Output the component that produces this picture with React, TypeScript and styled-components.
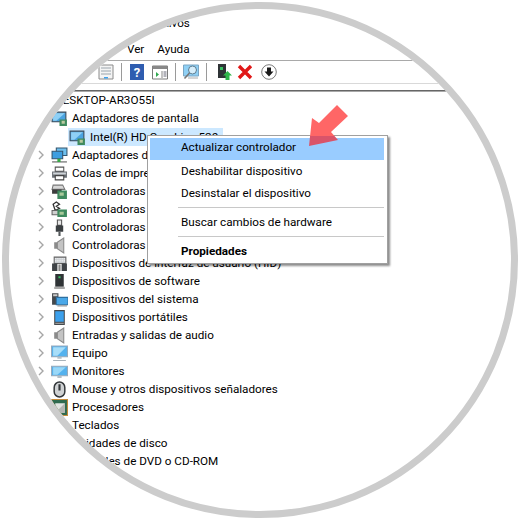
import { ReactNode } from 'react';
import styled, { createGlobalStyle } from 'styled-components';

const GlobalStyle = createGlobalStyle`
  html, body {
    margin: 0;
    padding: 0;
    background: #fff;
  }
  body {
    font-family: Roboto, "Noto Sans", sans-serif;
    font-size: 11.7px;
    color: #000;
  }
`;

const Page = styled.div`
  width: 520px;
  height: 520px;
  padding: 2px;
  box-sizing: border-box;
  background: #fff;
  overflow: hidden;
`;

const Lens = styled.div`
  position: relative;
  width: 516px;
  height: 516px;
  box-sizing: border-box;
  border: 7px solid #cccccc;
  border-radius: 50%;
  overflow: hidden;
  background: #fff;
`;

const TitleBar = styled.div`
  height: 23px;
  padding: 7px 0 0 26px;
  line-height: 14px;
`;

const MenuBar = styled.div`
  display: flex;
  gap: 13px;
  height: 21px;
  padding-left: 17px;
  line-height: 20px;
`;

const Toolbar = styled.div`
  display: flex;
  align-items: center;
  height: 22px;
  padding-left: 89px;
  border-top: 1px solid #a9a9a9;
  border-bottom: 1px solid #d9d9d9;
`;

const ToolSep = styled.span`
  width: 1px;
  height: 18px;
  margin: 0 7px;
  background: #9a9a9a;
`;

const ToolIcon = styled.svg<{ $lead?: number; $gap?: number }>`
  width: 16px;
  height: 16px;
  flex: none;
  margin-left: ${(p) => p.$lead ?? 0}px;
  margin-right: ${(p) => p.$gap ?? 0}px;
`;

const Rule = styled.div`
  height: 2px;
  margin-top: 6px;
  background: linear-gradient(#666 50%, #a8a8a8 50%);
`;

const Tree = styled.div`
  margin-top: -1px;
`;

const Row = styled.div<{ $indent: number; $drop?: boolean }>`
  display: flex;
  align-items: center;
  height: 18px;
  margin-top: ${(p) => (p.$drop ? 1 : 0)}px;
  padding-left: ${(p) => p.$indent}px;
  white-space: nowrap;
`;

const Arrow = styled.svg`
  width: 6px;
  height: 10px;
  flex: none;
  margin-right: 7px;
`;

const NoArrow = styled.span`
  width: 13px;
  flex: none;
`;

const RowIcon = styled.svg`
  width: 17px;
  height: 17px;
  flex: none;
  margin-right: 4px;
`;

const RowLabel = styled.span`
  line-height: 18px;
`;

const Selected = styled.div`
  display: flex;
  align-items: center;
  width: 154px;
  height: 18px;
  margin-left: -1px;
  padding-left: 1px;
  background: #cce8ff;
`;

const ContextMenu = styled.div`
  position: absolute;
  left: 138px;
  top: 126px;
  width: 241px;
  padding: 2px 2px 1px;
  box-sizing: border-box;
  background: #fff;
  border: 1px solid #a0a0a0;
  box-shadow: 2px 2px 2px rgba(0, 0, 0, 0.45);
`;

const MenuItem = styled.div<{ $active?: boolean; $bold?: boolean }>`
  height: 22px;
  margin-right: 1px;
  padding-left: 31px;
  line-height: ${(p) => (p.$active ? 19 : 22)}px;
  background: ${(p) => (p.$active ? '#99ccff' : 'transparent')};
  font-weight: ${(p) => (p.$bold ? 700 : 400)};
`;

const MenuSep = styled.div`
  height: 1px;
  margin: 3px 1px 3px 28px;
  background: #c8c8c8;
`;

const Pointer = styled.svg`
  position: absolute;
  left: 297px;
  top: 96px;
  width: 45px;
  height: 45px;
`;

type IconKind =
  | 'display' | 'network' | 'printer' | 'storage' | 'sound' | 'usb' | 'speaker'
  | 'input' | 'tower' | 'system' | 'portable' | 'monitor' | 'pc' | 'mouse' | 'cpu' | 'keyboard' | 'disk' | 'dvd';

const glyphs: Record<IconKind, ReactNode> = {
  display: (
    <>
      <path d="M1 2h13v9H1z" fill="#4aa3e0" stroke="#3a4a58" />
      <path d="M2 3h11L5 10H2z" fill="#8fd0f5" />
      <path d="M8 9h7v6H8z" fill="#3f8a5e" />
      <path d="M10 10h3v3h-3z" fill="#b9c9a0" />
    </>
  ),
  network: (
    <>
      <path d="M5 1h10v7H5z" fill="#6fc0ee" stroke="#34566f" />
      <path d="M1 4h10v7H1z" fill="#3d9ee0" stroke="#34566f" />
      <path d="M1 14h14" stroke="#9a9a9a" strokeWidth="1.5" />
      <path d="M6 11h3v3H6z" fill="#36a846" />
    </>
  ),
  printer: (
    <>
      <path d="M4 2h8v4H4z" fill="#fff" stroke="#555" />
      <path d="M1 6h14v6H1z" fill="#6a6f75" />
      <path d="M2 7h12v2H2z" fill="#cfd4d8" />
      <path d="M4 10h8v4H4z" fill="#fff" stroke="#444" />
    </>
  ),
  storage: (
    <>
      <path d="M2 2h9l2 4H1z" fill="#d8d8d8" stroke="#777" />
      <path d="M1 6h9v4H1z" fill="#3d3d3d" />
      <path d="M6 7h9v8H6z" fill="#3f8a5e" />
      <path d="M8 9h4v3H8z" fill="#a9c99a" />
    </>
  ),
  sound: (
    <>
      <path d="M2 3l3-2 3 2-3 2 3 2-4 2z" fill="none" stroke="#333" strokeWidth="1.2" />
      <path d="M1 9h7v4H1z" fill="#cfcfcf" stroke="#666" />
      <path d="M6 8h9v7H6z" fill="#3f8a5e" />
      <path d="M8 10h4v3H8z" fill="#a9c99a" />
    </>
  ),
  usb: (
    <>
      <path d="M6 1h4v5H6z" fill="#e8e8e8" stroke="#555" />
      <path d="M4.500 6h7v6h-7z" fill="#3b3f42" />
      <path d="M7 12h2v4H7z" fill="#55595c" />
    </>
  ),
  speaker: (
    <>
      <path d="M3 5h3v6H3z" fill="#8b8b8b" />
      <path d="M6 5l6-4v14l-6-4z" fill="#c4c4c4" stroke="#8b8b8b" />
    </>
  ),
  input: (
    <>
      <path d="M3 2h11v6H3z" fill="#c8ccd0" stroke="#666" />
      <path d="M4 3.500h9M4 5.500h9" stroke="#fff" strokeDasharray="1 1" />
      <path d="M1 8h5v7H1zM10 8h5v7h-5z" fill="#3f4347" />
      <path d="M7 9h2v6H7z" fill="#888" />
    </>
  ),
  tower: (
    <>
      <path d="M4 1h8v12H4z" fill="#2f3336" />
      <path d="M7 3h2v2H7z" fill="#36c060" />
      <path d="M3 13h10v2H3z" fill="#a8a8a8" />
    </>
  ),
  system: (
    <>
      <path d="M1 2h6v11H1z" fill="#44484c" />
      <path d="M2 3h4v2H2z" fill="#ccc" />
      <path d="M5 6h11v7H5z" fill="#4aa8e8" stroke="#2f6f9f" />
      <path d="M6 14h9" stroke="#999" />
    </>
  ),
  portable: (
    <>
      <path d="M3 1h10v14H3z" fill="#454a4e" />
      <path d="M4 2h8v10H4z" fill="#3ca0ec" />
      <path d="M4 13h8v1H4z" fill="#999" />
    </>
  ),
  monitor: (
    <>
      <path d="M0.500 3h15v9H0.500z" fill="#54b2ee" stroke="#9ab" />
      <path d="M2 4h12L6 11H2z" fill="#9ad8f8" />
      <path d="M6 12h4v2H6z" fill="#b5bfc6" />
    </>
  ),
  pc: (
    <>
      <path d="M0.500 1h15v10H0.500z" fill="#54b2ee" stroke="#9ab" />
      <path d="M2 2h12L6 10H2z" fill="#a8def9" />
      <path d="M6 11h4v2H6z" fill="#b5bfc6" />
      <path d="M2 14h12v1H2z" fill="#a9b3ba" />
    </>
  ),
  mouse: (
    <>
      <rect x="3" y="1" width="10" height="14" rx="5" fill="#cfd2d4" stroke="#33373a" strokeWidth="1.4" />
      <path d="M7 3h2v6H7z" fill="#33373a" />
    </>
  ),
  cpu: (
    <>
      <path d="M0 0h16v16H0z" fill="#c48a3a" />
      <path d="M1 1h14v14H1z" fill="#2f6b50" />
      <path d="M4 4h9v9H4z" fill="#e2e4e2" />
      <path d="M13 4v9H4z" fill="#b3b6b3" />
    </>
  ),
  keyboard: <path d="M0 5h16v8H0z" fill="#b9bec2" stroke="#666" />,
  disk: <path d="M1 5h14v8H1z" fill="#b9bec2" stroke="#666" />,
  dvd: <path d="M1 5h14v8H1z" fill="#b9bec2" stroke="#666" />,
};

type Item = { label: string; icon?: IconKind; indent?: number; selected?: boolean; leaf?: boolean };

const items: Item[] = [
  { label: 'DESKTOP-AR3O55I', indent: 33, leaf: true },
  { label: 'Adaptadores de pantalla', icon: 'display', leaf: true },
  { label: 'Intel(R) HD Graphics 520', icon: 'display', indent: 47, selected: true, leaf: true },
  { label: 'Adaptadores de red', icon: 'network' },
  { label: 'Colas de impresión', icon: 'printer' },
  { label: 'Controladoras de almacenamiento', icon: 'storage' },
  { label: 'Controladoras de sonido y vídeo', icon: 'sound' },
  { label: 'Controladoras de bus serie universal', icon: 'usb' },
  { label: 'Controladoras de audio', icon: 'speaker' },
  { label: 'Dispositivos de interfaz de usuario (HID)', icon: 'input' },
  { label: 'Dispositivos de software', icon: 'tower' },
  { label: 'Dispositivos del sistema', icon: 'system' },
  { label: 'Dispositivos portátiles', icon: 'portable' },
  { label: 'Entradas y salidas de audio', icon: 'speaker' },
  { label: 'Equipo', icon: 'pc' },
  { label: 'Monitores', icon: 'monitor' },
  { label: 'Mouse y otros dispositivos señaladores', icon: 'mouse', leaf: true },
  { label: 'Procesadores', icon: 'cpu' },
  { label: 'Teclados', icon: 'keyboard' },
  { label: 'Unidades de disco', icon: 'disk' },
  { label: 'Unidades de DVD o CD-ROM', icon: 'dvd' },
];

const Chevron = () => (
  <Arrow viewBox="0 0 6 10">
    <path d="M1 1l4 4-4 4" fill="none" stroke="#a6a6a6" strokeWidth="1.4" />
  </Arrow>
);

const TreeRow = ({ item }: { item: Item }) => {
  const body = (
    <>
      {item.icon && <RowIcon viewBox="0 0 16 16">{glyphs[item.icon]}</RowIcon>}
      <RowLabel>{item.label}</RowLabel>
    </>
  );
  return (
    <Row $indent={item.indent ?? 29} $drop={item.selected}>
      {item.leaf ? <NoArrow /> : <Chevron />}
      {item.selected ? <Selected>{body}</Selected> : body}
    </Row>
  );
};

export default function App() {
  return (
    <Page>
      <GlobalStyle />
      <Lens>
        <TitleBar>Administrador de dispositivos</TitleBar>
        <MenuBar>
          <span>Archivo</span>
          <span>Acción</span>
          <span>Ver</span>
          <span>Ayuda</span>
        </MenuBar>
        <Toolbar>
          <ToolIcon viewBox="0 0 16 16">
            <path d="M1 1h14v14H1z" fill="#f4f4f4" stroke="#8a8a8a" />
            <path d="M3 4h10M3 7h10M3 10h10" stroke="#9aa4ac" />
            <path d="M6 13h4v1.500H6z" fill="#3ca0ec" />
          </ToolIcon>
          <ToolSep />
          <ToolIcon viewBox="0 0 16 16" $gap={7}>
            <path d="M1 0h14v16H1z" fill="#2f5db0" />
            <text x="8" y="13" fontSize="13" fontWeight="700" fill="#fff" textAnchor="middle">?</text>
          </ToolIcon>
          <ToolIcon viewBox="0 0 16 16">
            <path d="M0.500 2h15v13H0.500z" fill="#fff" stroke="#7a7a7a" />
            <path d="M0.500 2h15v3H0.500z" fill="#888" />
            <path d="M4 8l3 2.500-3 2.500z" fill="#2fa84f" />
            <path d="M10 7v7" stroke="#888" />
            <path d="M11.500 8h3M11.500 10h3M11.500 12h3" stroke="#667" />
          </ToolIcon>
          <ToolSep />
          <ToolIcon viewBox="0 0 16 16">
            <path d="M0.500 1h15v11H0.500z" fill="#8fd0f5" stroke="#7aa6c4" />
            <circle cx="9.500" cy="6" r="4" fill="#d6eefb" stroke="#5d7c90" />
            <path d="M6.500 9l-5 5.500" stroke="#777" strokeWidth="1.600" />
            <path d="M5 14h10" stroke="#aaa" />
          </ToolIcon>
          <ToolSep />
          <ToolIcon viewBox="0 0 16 16" $lead={2} $gap={5}>
            <path d="M2 0h8v14H2z" fill="#2f3336" />
            <path d="M4 3h3v3H4z" fill="#36c060" />
            <path d="M11.500 7l4.500 4.500h-2.500V16h-4v-4.500H7z" fill="#2fb54a" />
          </ToolIcon>
          <ToolIcon viewBox="0 0 16 16" $gap={8}>
            <path d="M2 2l12 12M14 2L2 14" stroke="#e01818" strokeWidth="3.400" />
          </ToolIcon>
          <ToolIcon viewBox="0 0 16 16">
            <circle cx="8" cy="8" r="7.300" fill="#fff" stroke="#7a7a7a" />
            <path d="M6 3.500h4v4h2.500L8 12.500 3.500 7.500H6z" fill="#1a1a1a" />
          </ToolIcon>
        </Toolbar>
        <Rule />
        <Tree>
          {items.map((item) => (
            <TreeRow key={item.label} item={item} />
          ))}
        </Tree>
        <ContextMenu>
          <MenuItem $active>Actualizar controlador</MenuItem>
          <MenuItem>Deshabilitar dispositivo</MenuItem>
          <MenuItem>Desinstalar el dispositivo</MenuItem>
          <MenuSep />
          <MenuItem>Buscar cambios de hardware</MenuItem>
          <MenuSep />
          <MenuItem $bold>Propiedades</MenuItem>
        </ContextMenu>
        <Pointer viewBox="0 0 45 45">
          <defs>
            <linearGradient id="pointerFill" gradientUnits="userSpaceOnUse" x1="0" y1="0" x2="0" y2="45">
              <stop offset="0.69" stopColor="#ff6666" />
              <stop offset="0.69" stopColor="#d9546a" />
            </linearGradient>
          </defs>
          <polygon points="3,41 6,13 13,18 31,0 42,11 25,27 32,35" fill="url(#pointerFill)" />
        </Pointer>
      </Lens>
    </Page>
  );
}
